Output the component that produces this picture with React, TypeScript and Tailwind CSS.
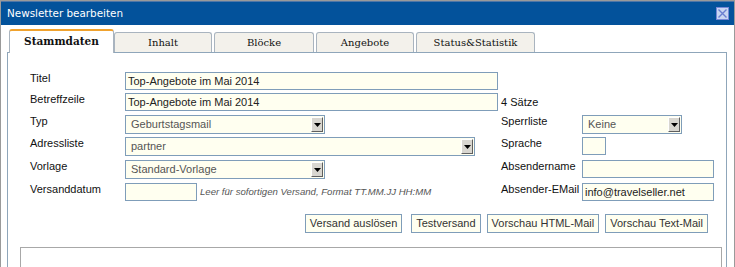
import React from "react";

const sans = "font-['Liberation_Sans',Arial,sans-serif]";

function Select({ value, width }: { value: string; width: string }) {
  return (
    <div
      className={`${width} h-[19px] flex items-center justify-between border border-[#7f9db9] bg-[#fffff0] pl-[5px] pr-px`}
    >
      <span className="text-[11px] text-[#555] leading-none">{value}</span>
      <span className="w-[12px] h-[15px] flex items-center justify-center bg-[#d8d6d0] border-t border-l border-t-white border-l-white border-r border-b border-r-[#5f5f5f] border-b-[#5f5f5f]">
        <svg width="7" height="4" viewBox="0 0 7 4">
          <polygon points="0,0 7,0 3.5,4" fill="#000" />
        </svg>
      </span>
    </div>
  );
}

function Input({ value = "", width }: { value?: string; width: string }) {
  return (
    <div
      className={`${width} h-[18px] flex items-center border border-[#7f9db9] bg-[#fffff0] pl-[2px] text-[11px] text-[#222] leading-none whitespace-nowrap overflow-hidden`}
    >
      {value}
    </div>
  );
}

function Label({ children }: { children: React.ReactNode }) {
  return <div className="text-[11px] leading-[13px] text-[#111]">{children}</div>;
}

function Button({ children, className = "" }: { children: React.ReactNode; className?: string }) {
  return (
    <button
      className={`h-[19px] px-[4px] border border-[#7f9db9] bg-[#fffff0] text-[11px] leading-none text-[#333] ${className}`}
    >
      {children}
    </button>
  );
}

export default function App() {
  const tabs = ["Inhalt", "Blöcke", "Angebote", "Status&Statistik"];
  const tabWidths = ["w-[98px]", "w-[100px]", "w-[98px]", "w-[119px]"];

  return (
    <div className={`w-[735px] h-[267px] overflow-hidden bg-white ${sans}`}>
      <div className="h-[267px] border-t border-l border-r border-[#9a9a9a]">
        {/* title bar */}
        <div className="h-[24px] bg-[#03529b] flex items-center justify-between pl-[6px] pr-[5px] border-t border-[#4f77a8]">
          <span className="text-white text-[10.4px] font-['DejaVu_Sans',sans-serif] leading-none">
            Newsletter bearbeiten
          </span>
          <span className="w-[13px] h-[13px] flex items-center justify-center bg-[#c9d5f2] border border-[#7687d6]">
            <svg width="11" height="11" viewBox="0 0 11 11">
              <path d="M1.5 1.5 L9.5 9.5 M9.5 1.5 L1.5 9.5" stroke="#6b7fd0" strokeWidth="1.4" />
            </svg>
          </span>
        </div>

        {/* tabs */}
        <div className="pl-[8px] pt-[4px] flex items-end font-['DejaVu_Serif',serif] text-[10px] text-[#111]">
          <div className="relative z-10 -mb-px w-[105px] h-[24px] bg-white border-t-2 border-t-[#f0a22e] border-l border-r border-l-[#a9b4bf] border-r-[#a9b4bf] rounded-t-[3px] flex items-center justify-center font-bold text-[10.5px]">
            Stammdaten
          </div>
          {tabs.map((t, i) => (
            <div
              key={t}
              className={`${tabWidths[i]} ${i > 0 ? "ml-[2px]" : ""} h-[20px] bg-[#f3f1eb] border border-b-0 border-[#a9b4bf] rounded-t-[3px] flex items-center justify-center`}
            >
              {t}
            </div>
          ))}
        </div>

        {/* panel */}
        <div className="ml-[6px] w-[720px] h-[220px] border-t border-l border-r border-[#8fa6ba] pt-[19px]">
          <div className="pl-[22px] grid grid-cols-[95px_376px_81px_1fr] grid-rows-[21px_22px_22px_23px_23px_22px]">
            <Label>Titel</Label>
            <Input value="Top-Angebote im Mai 2014" width="w-[373px]" />
            <div />
            <div />

            <Label>Betreffzeile</Label>
            <Input value="Top-Angebote im Mai 2014" width="w-[373px]" />
            <div className="pt-[3px]">
              <Label>4 Sätze</Label>
            </div>
            <div />

            <Label>Typ</Label>
            <Select value="Geburtstagsmail" width="w-[200px]" />
            <Label>Sperrliste</Label>
            <Select value="Keine" width="w-[100px]" />

            <Label>Adressliste</Label>
            <Select value="partner" width="w-[350px]" />
            <Label>Sprache</Label>
            <Input width="w-[24px]" />

            <Label>Vorlage</Label>
            <Select value="Standard-Vorlage" width="w-[200px]" />
            <Label>Absendername</Label>
            <Input width="w-[132px]" />

            <Label>Versanddatum</Label>
            <div className="flex items-start">
              <Input width="w-[72px]" />
              <span className="ml-[3px] mt-[4px] text-[9.6px] italic text-[#555] leading-none whitespace-nowrap">
                Leer für sofortigen Versand, Format TT.MM.JJ HH:MM
              </span>
            </div>
            <Label>Absender-EMail</Label>
            <Input value="info@travelseller.net" width="w-[132px]" />
          </div>

          <div className="mt-[9px] pr-[18px] flex justify-end">
            <Button>Versand auslösen</Button>
            <Button className="ml-[9px]">Testversand</Button>
            <Button className="ml-[6px]">Vorschau HTML-Mail</Button>
            <Button className="ml-[6px]">Vorschau Text-Mail</Button>
          </div>

          <div className="mt-[14px] ml-[12px] mr-[4px] h-[40px] border-t border-l border-r border-[#a8a8a8]" />
        </div>
      </div>
    </div>
  );
}
